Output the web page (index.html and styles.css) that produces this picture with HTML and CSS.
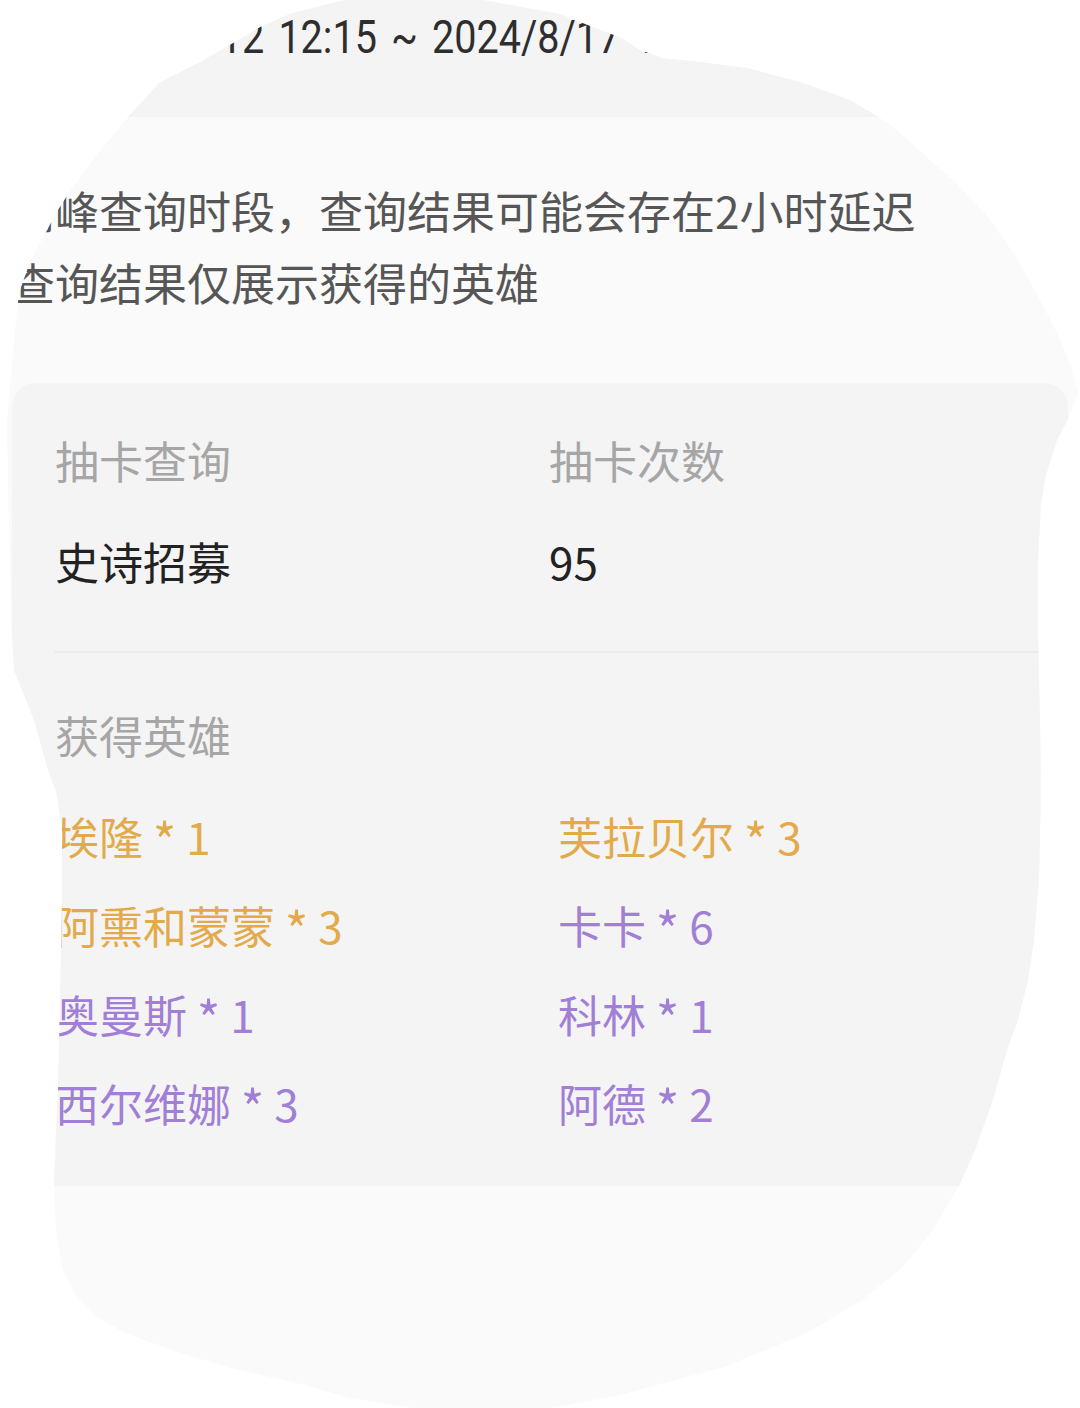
FILE: index.html
```html
<!DOCTYPE html>
<html lang="zh-CN">
<head>
<meta charset="utf-8">
<title>抽卡查询</title>
<link rel="stylesheet" href="styles.css">
</head>
<body>
<div class="screen">
  <div class="period"><span class="period-text">2024/8/12 12:15 ~ 2024/8/17 12:15</span></div>
  <div class="notice">
    <p>高峰查询时段，查询结果可能会存在2小时延迟</p>
    <p>查询结果仅展示获得的英雄</p>
  </div>
  <div class="card">
    <div class="summary">
      <div class="cell">
        <div class="label">抽卡查询</div>
        <div class="value">史诗招募</div>
      </div>
      <div class="cell">
        <div class="label">抽卡次数</div>
        <div class="value">95</div>
      </div>
    </div>
    <div class="divider"></div>
    <div class="label heroes-title">获得英雄</div>
    <ul class="heroes">
      <li class="gold">埃隆 <span class="star">*</span> 1</li>
      <li class="gold">芙拉贝尔 <span class="star">*</span> 3</li>
      <li class="gold">阿熏和蒙蒙 <span class="star">*</span> 3</li>
      <li class="purple">卡卡 <span class="star">*</span> 6</li>
      <li class="purple">奥曼斯 <span class="star">*</span> 1</li>
      <li class="purple">科林 <span class="star">*</span> 1</li>
      <li class="purple">西尔维娜 <span class="star">*</span> 3</li>
      <li class="purple">阿德 <span class="star">*</span> 2</li>
    </ul>
  </div>
</div>
</body>
</html>
```

FILE: styles.css
```css
html, body {
  margin: 0;
  padding: 0;
  background: #ffffff;
  overflow: hidden;
}

.screen {
  width: 1080px;
  height: 1408px;
  background: #fafafa;
  font-family: "Noto Sans CJK SC", "Noto Sans", sans-serif;
  clip-path: polygon(
    345px 0px, 483px 0px, 560px 14px, 600px 30px, 622px 38px, 640px 50px,
    662px 58px, 700px 62px, 747px 68px, 800px 82px, 850px 100px,
    890px 124px, 919px 150px,
    955px 182px, 988px 217px, 1015px 255px, 1040px 300px, 1058px 335px,
    1071px 367px, 1078px 392px, 1070px 415px, 1057px 440px, 1046px 475px,
    1041px 503px, 1038px 560px, 1038px 637px, 1040px 720px, 1041px 790px,
    1039px 880px, 1034px 940px, 1028px 980px, 1018px 1020px, 1007px 1050px,
    993px 1100px, 975px 1150px, 959px 1186px, 931px 1233px, 903px 1267px,
    862px 1300px, 807px 1333px, 724px 1367px, 620px 1395px, 550px 1408px,
    414px 1408px, 350px 1398px, 297px 1383px, 230px 1368px, 172px 1350px,
    125px 1333px, 97px 1317px, 75px 1295px, 62px 1267px, 56px 1230px,
    54px 1186px, 56px 1130px, 58px 1090px, 60px 1000px, 62px 900px,
    62px 830px, 57px 795px, 48px 770px, 34px 720px, 20px 685px,
    14px 670px, 11px 620px, 10px 570px, 8px 480px, 7px 420px, 9px 400px,
    12px 367px, 15px 330px, 19px 293px, 30px 262px, 44px 236px,
    56px 213px, 72px 188px, 97px 155px, 128px 117px, 159px 83px,
    200px 62px, 228px 46px, 245px 36px, 262px 26px, 290px 14px, 320px 6px
  );
}

.period {
  height: 117px;
  box-sizing: border-box;
  padding: 14px 0 0 76px;
  background: #f4f4f4;
  font-family: "Roboto", "Liberation Sans", sans-serif;
  font-size: 46px;
  line-height: 46px;
  color: #2e2e2e;
  white-space: nowrap;
}

.period-text {
  display: inline-block;
  word-spacing: 5px;
  transform: scaleX(0.86);
  transform-origin: 0 0;
}

.notice {
  padding: 57px 0 65px 11px;
  font-size: 44px;
  line-height: 72px;
  color: #565656;
  white-space: nowrap;
}

.notice p {
  margin: 0;
}

.card {
  margin: 0 12px;
  padding: 47px 43px 53px;
  background: #f4f4f4;
  border-radius: 24px;
  font-size: 44px;
  line-height: 60px;
}

.summary {
  display: grid;
  grid-template-columns: 494px 1fr;
}

.cell {
  display: flex;
  flex-direction: column;
  gap: 41px;
}

.label {
  color: #a6a6a6;
}

.value {
  color: #222222;
}

.divider {
  height: 2px;
  margin: 60px -30px 0 0;
  background: #ebebeb;
}

.heroes-title {
  margin-top: 52px;
}

.heroes {
  list-style: none;
  margin: 41px 0 0;
  padding: 0;
  display: grid;
  grid-template-columns: 503px 1fr;
  grid-auto-rows: 60px;
  row-gap: 29px;
  white-space: nowrap;
}

.heroes li {
  height: 60px;
}

.star {
  font-size: 1.15em;
  line-height: 0;
  vertical-align: -0.12em;
}

.gold {
  color: #e3aa4c;
}

.purple {
  color: #a27fd6;
}
```
